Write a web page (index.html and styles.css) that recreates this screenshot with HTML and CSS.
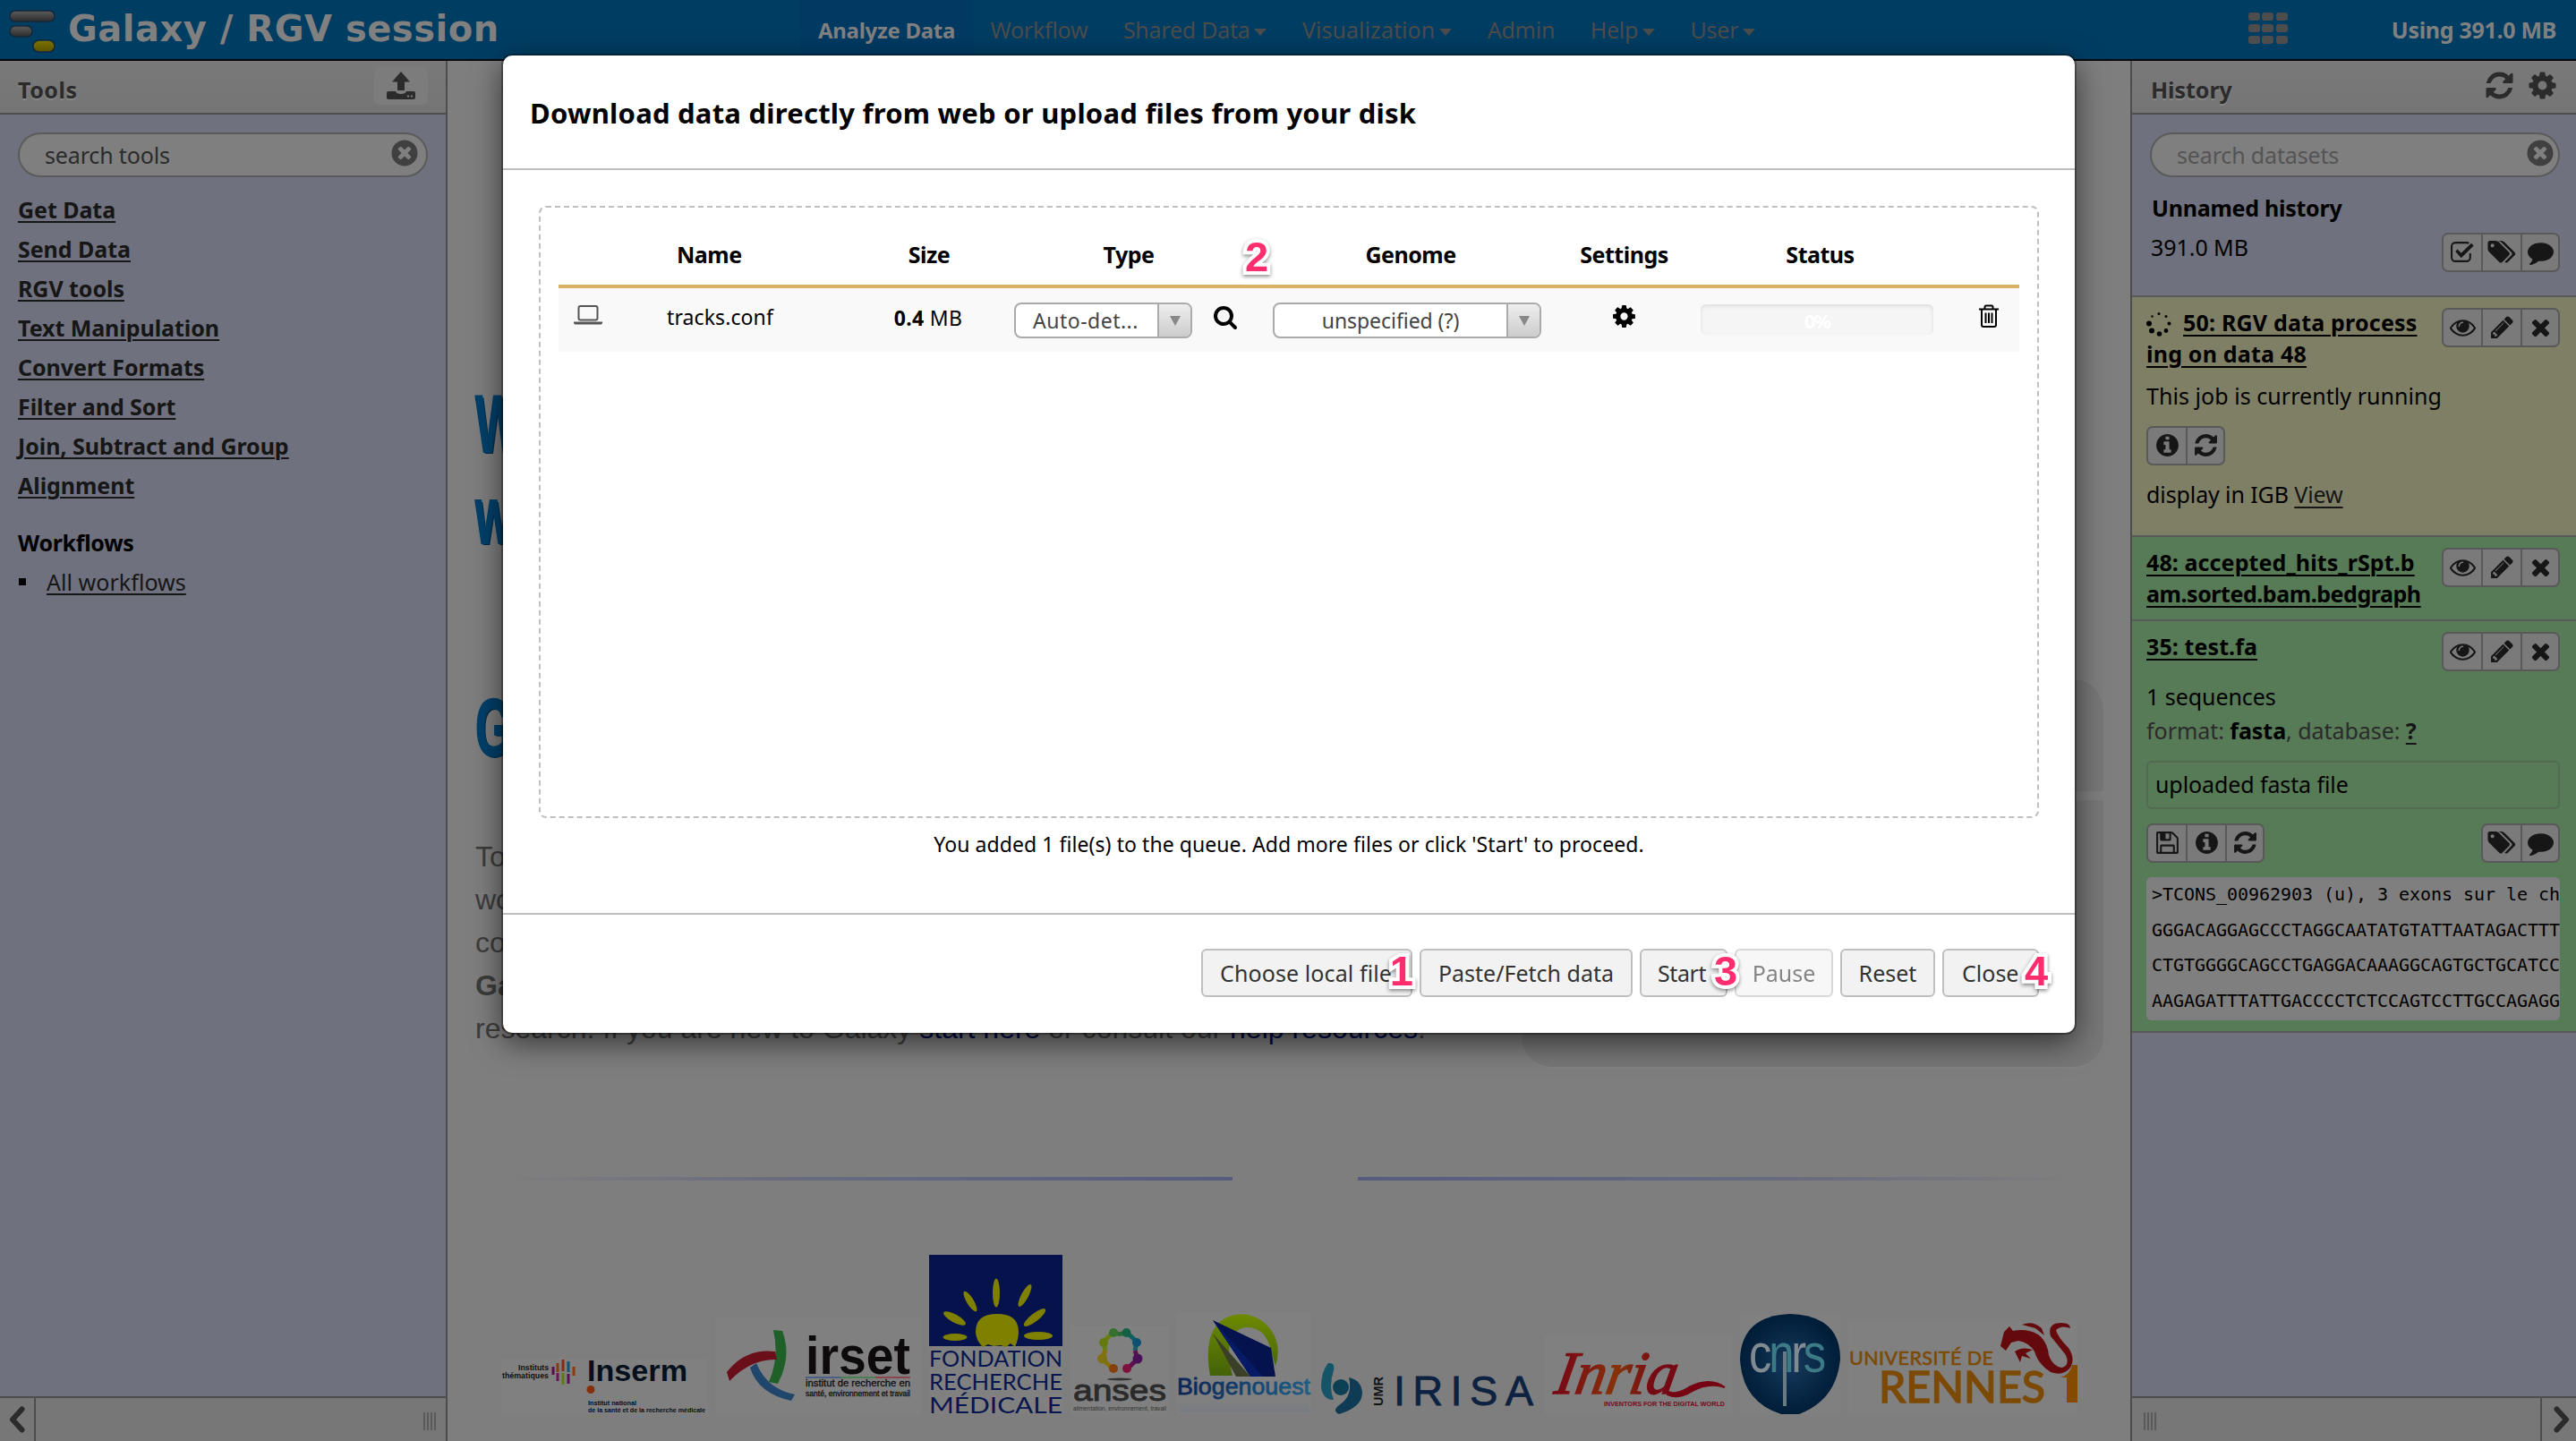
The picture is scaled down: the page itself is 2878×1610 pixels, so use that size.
FILE: index.html
```html
<!DOCTYPE html>
<html lang="en">
<head>
<meta charset="utf-8">
<title>Galaxy / RGV session</title>
<link rel="stylesheet" href="styles.css">
</head>
<body>
<svg class="sprite" aria-hidden="true">
  <symbol id="refresh" viewBox="0 0 1792 1792"><path d="M1639 1056q0 5-1 7-64 268-268 434.5t-478 166.5q-146 0-282.5-55t-243.5-157l-129 129q-19 19-45 19t-45-19-19-45v-448q0-26 19-45t45-19h448q26 0 45 19t19 45-19 45l-137 137q71 66 161 102t187 36q134 0 250-65t186-179q11-17 53-117 8-23 30-23h192q13 0 22.500 9.500t9.500 22.500zm25-800v448q0 26-19 45t-45 19h-448q-26 0-45-19t-19-45 19-45l138-138q-148-137-349-137-134 0-250 65t-186 179q-11 17-53 117-8 23-30 23h-199q-13 0-22.500-9.500t-9.500-22.500v-7q65-268 270-434.500t480-166.500q146 0 284 55.500t245 156.500l130-129q19-19 45-19t45 19 19 45z"/></symbol>
  <symbol id="cog" viewBox="0 0 1792 1792"><path d="M1152 896q0-106-75-181t-181-75-181 75-75 181 75 181 181 75 181-75 75-181zm512-109v222q0 12-8 23t-20 13l-185 28q-19 54-39 91 35 50 107 138 10 12 10 25t-9 23q-27 37-99 108t-94 71q-12 0-26-9l-138-108q-44 23-91 38-16 136-29 186-7 28-36 28h-222q-14 0-24.500-8.500t-11.500-21.500l-28-184q-49-16-90-37l-141 107q-10 9-25 9-14 0-25-11-126-114-165-168-7-10-7-23 0-12 8-23 15-21 51-66.500t54-70.500q-27-50-41-99l-183-27q-13-2-21-12.500t-8-23.500v-222q0-12 8-23t19-13l186-28q14-46 39-92-40-57-107-138-10-12-10-24 0-10 9-23 26-36 98.500-107.500t94.500-71.500q13 0 26 10l138 107q44-23 91-38 16-136 29-186 7-28 36-28h222q14 0 24.500 8.500t11.500 21.500l28 184q49 16 90 37l142-107q9-9 24-9 13 0 25 10 129 119 165 170 7 8 7 22 0 12-8 23-15 21-51 66.500t-54 70.500q26 50 41 98l183 28q13 2 21 12.500t8 23.500z"/></symbol>
  <symbol id="times" viewBox="0 0 1792 1792"><path d="M1490 1322q0 40-28 68l-136 136q-28 28-68 28t-68-28l-294-294-294 294q-28 28-68 28t-68-28l-136-136q-28-28-28-68t28-68l294-294-294-294q-28-28-28-68t28-68l136-136q28-28 68-28t68 28l294 294 294-294q28-28 68-28t68 28l136 136q28 28 28 68t-28 68l-294 294 294 294q28 28 28 68z"/></symbol>
  <symbol id="clear" viewBox="0 0 1792 1792"><path d="M1277 1122q0-26-19-45l-181-181 181-181q19-19 19-45 0-27-19-46l-90-90q-19-19-46-19-26 0-45 19l-181 181-181-181q-19-19-45-19-27 0-46 19l-90 90q-19 19-19 46 0 26 19 45l181 181-181 181q-19 19-19 45 0 27 19 46l90 90q19 19 46 19 26 0 45-19l181-181 181 181q19 19 45 19 27 0 46-19l90-90q19-19 19-46zm387-226q0 209-103 385.500t-279.500 279.500-385.500 103-385.500-103-279.500-279.500-103-385.500 103-385.500 279.500-279.500 385.500-103 385.500 103 279.500 279.500 103 385.500z"/></symbol>
  <symbol id="pencil" viewBox="0 0 1792 1792"><path d="M491 1536l91-91-235-235-91 91v107h128v128h107zm523-928q0-22-22-22-10 0-17 7l-542 542q-7 7-7 17 0 22 22 22 10 0 17-7l542-542q7-7 7-17zm-54-192l416 416-832 832h-416v-416zm683 96q0 53-37 90l-166 166-416-416 166-165q36-38 90-38 53 0 91 38l235 234q37 39 37 91z"/></symbol>
  <symbol id="eye" viewBox="0 0 1792 1792"><path d="M1664 960q-152-236-381-353 61 104 61 225 0 185-131.500 316.500t-316.500 131.500-316.500-131.500-131.500-316.500q0-121 61-225-229 117-381 353 133 205 333.500 326.500t434.500 121.500 434.500-121.500 333.500-326.500zm-720-384q0-20-14-34t-34-14q-125 0-214.500 89.500t-89.500 214.500q0 20 14 34t34 14 34-14 14-34q0-86 61-147t147-61q20 0 34-14t14-34zm848 384q0 34-20 69-140 230-376.500 368.500t-499.500 138.500-499.500-139-376.500-368q-20-35-20-69t20-69q140-229 376.500-368t499.500-139 499.500 139 376.500 368q20 35 20 69z"/></symbol>
  <symbol id="comment" viewBox="0 0 1792 1792"><path d="M1792 896q0 174-120 321.500t-326 233-450 85.500q-70 0-145-8-198 175-460 242-49 14-114 22-17 2-30.500-9t-17.500-29v-1q-3-4-.5-12t2-10 4.500-9.500l6-9 7-8.500 8-9q7-8 31-34.500t34.500-38 31-39.500 32.500-51 27-59 26-76q-157-89-247.500-220t-90.500-281q0-130 71-248.500t191-204.500 286-136.500 348-50.500q244 0 450 85.500t326 233 120 321.500z"/></symbol>
  <symbol id="tags" viewBox="0 0 1920 1792"><path d="M448 448q0-53-37.500-90.500t-90.500-37.500-90.500 37.500-37.500 90.500 37.500 90.500 90.500 37.500 90.500-37.500 37.500-90.500zm1067 576q0 53-37 90l-491 492q-39 37-91 37-53 0-90-37l-715-716q-38-37-64.500-101t-26.500-117v-416q0-52 38-90t90-38h416q53 0 117 26.500t102 64.500l715 714q37 39 37 91z"/><path d="M1899 1024q0 53-37 90l-491 492q-39 37-91 37-36 0-59-14t-53-45l470-470q37-37 37-90 0-52-37-91l-715-714q-38-38-102-64.500t-117-26.500h224q53 0 117 26.500t102 64.500l715 714q37 39 37 91z"/></symbol>
  <symbol id="info" viewBox="0 0 1792 1792"><path d="M1152 1376v-160q0-14-9-23t-23-9h-96v-512q0-14-9-23t-23-9h-320q-14 0-23 9t-9 23v160q0 14 9 23t23 9h96v320h-96q-14 0-23 9t-9 23v160q0 14 9 23t23 9h448q14 0 23-9t9-23zm-128-896v-160q0-14-9-23t-23-9h-192q-14 0-23 9t-9 23v160q0 14 9 23t23 9h192q14 0 23-9t9-23zm640 416q0 209-103 385.500t-279.500 279.500-385.500 103-385.500-103-279.500-279.500-103-385.500 103-385.500 279.500-279.500 385.500-103 385.500 103 279.500 279.500 103 385.500z"/></symbol>
  <symbol id="save" viewBox="0 0 1792 1792"><path d="M512 1536h768v-384h-768v384zm896 0h128v-896q0-14-10-38.500t-20-34.500l-281-281q-10-10-34-20t-39-10v416q0 40-28 68t-68 28h-576q-40 0-68-28t-28-68v-416h-128v1280h128v-416q0-40 28-68t68-28h832q40 0 68 28t28 68v416zm-384-928v-320q0-13-9.500-22.500t-22.500-9.500h-192q-13 0-22.500 9.500t-9.500 22.500v320q0 13 9.500 22.500t22.500 9.500h192q13 0 22.500-9.500t9.500-22.500zm640 32v928q0 40-28 68t-68 28h-1344q-40 0-68-28t-28-68v-1344q0-40 28-68t68-28h928q40 0 88 20t76 48l280 280q28 28 48 76t20 88z"/></symbol>
  <symbol id="search" viewBox="0 0 1792 1792"><path d="M1216 832q0-185-131.500-316.500t-316.500-131.500-316.500 131.500-131.500 316.500 131.500 316.500 316.500 131.500 316.500-131.500 131.500-316.500zm512 832q0 52-38 90t-90 38q-54 0-90-38l-343-342q-179 124-399 124-143 0-273.500-55.500t-225-150-150-225-55.500-273.500 55.500-273.500 150-225 225-150 273.500-55.500 273.500 55.500 225 150 150 225 55.500 273.500q0 220-124 399l343 343q37 37 37 90z"/></symbol>
  <symbol id="check" viewBox="0 0 28 28"><path d="M22 15.500V20a4 4 0 0 1-4 4H6a4 4 0 0 1-4-4V8a4 4 0 0 1 4-4h12q1.500 0 2.500.7" fill="none" stroke="currentColor" stroke-width="2"/><path d="M6 13.500l2.300-2.300 4 4L23.200 4.600l2.600 2.600L12.300 20.500z"/></symbol>
  <symbol id="chev" viewBox="0 0 18 30"><path d="M14.500 3.500L4 15l10.500 11.500" fill="none" stroke="currentColor" stroke-width="6" stroke-linecap="round" stroke-linejoin="round"/></symbol>
</svg>

<header class="masthead">
  <div class="brand">
    <svg class="brand-logo" width="52" height="50" viewBox="0 0 52 50">
      <defs>
        <linearGradient id="gb" x2="0" y2="1"><stop offset="0" stop-color="#5c5c5c"/><stop offset="1" stop-color="#2c2c2c"/></linearGradient>
        <linearGradient id="gy" x2="0" y2="1"><stop offset="0" stop-color="#7d7400"/><stop offset="1" stop-color="#5a5200"/></linearGradient>
      </defs>
      <rect x="1" y="2" width="50" height="12" rx="6" fill="url(#gb)" stroke="#14283a" stroke-width="1.500"/>
      <rect x="1" y="19" width="25" height="12" rx="6" fill="url(#gb)" stroke="#14283a" stroke-width="1.500"/>
      <rect x="27" y="35" width="24" height="13" rx="6.500" fill="url(#gy)" stroke="#14283a" stroke-width="1.500"/>
    </svg>
    <span class="brand-name">Galaxy / RGV session</span>
  </div>
  <nav class="nav">
    <a class="nav-item active">Analyze Data</a>
    <a class="nav-item">Workflow</a>
    <a class="nav-item drop">Shared Data</a>
    <a class="nav-item drop viz">Visualization</a>
    <a class="nav-item">Admin</a>
    <a class="nav-item drop">Help</a>
    <a class="nav-item drop">User</a>
  </nav>
  <div class="apps"><i></i><i></i><i></i><i></i><i></i><i></i><i></i><i></i><i></i></div>
  <div class="quota">Using 391.0 MB</div>
</header>

<main class="main">
  <aside class="panel tools">
    <div class="panel-head">
      <span>Tools</span>
      <span class="upload"><svg width="32" height="32" viewBox="0 0 32 32"><path d="M16 0L26 11.500H20V21H12V11.500H6z"/><path d="M2 22h8q1 3 6 3t6-3h8q2 0 2 2v5q0 2-2 2H2q-2 0-2-2v-5q0-2 2-2z"/><circle cx="24" cy="27.500" r="1.200" fill="#777"/><circle cx="28" cy="27.500" r="1.200" fill="#777"/></svg></span>
    </div>
    <div class="panel-body">
      <div class="searchbox"><span>search tools</span><svg class="clear"><use href="#clear"/></svg></div>
      <div class="tool-list">
        <a>Get Data</a><a>Send Data</a><a>RGV tools</a><a>Text Manipulation</a><a>Convert Formats</a><a>Filter and Sort</a><a>Join, Subtract and Group</a><a>Alignment</a>
      </div>
      <div class="wf-title">Workflows</div>
      <div class="wf-item"><i></i><a>All workflows</a></div>
    </div>
    <div class="panel-foot">
      <div class="fold"><svg width="18" height="30"><use href="#chev"/></svg></div>
      <div class="grip"></div>
    </div>
  </aside>

  <section class="center">
    <div class="welcome">
      <div class="intro">
        <h1 class="big">W</h1>
        <h1 class="big">w</h1>
        <h1 class="big second">G</h1>
        <p class="lead">To<br>wo<br>co<br><b>Ga</b><br>research. If you are new to Galaxy <a>start here</a> or consult our <a>help resources</a>.</p>
      </div>
      <div class="cards"><div class="card top"></div><div class="card bottom"></div></div>
    </div>
    <div class="rules"><i></i><i></i></div>
    <div class="logos">
      <svg width="230" height="62" viewBox="0 0 230 62">
        <rect width="230" height="62" fill="#808080"/>
        <g class="logo-bold" fill="#111"><text x="19" y="13" font-size="8.500" textLength="34" lengthAdjust="spacingAndGlyphs">Instituts</text><text x="1" y="22" font-size="8.500" textLength="52" lengthAdjust="spacingAndGlyphs">thématiques</text></g>
        <g stroke-width="3"><path d="M58 9v9" stroke="#5a1050"/><path d="M63 5v10M81 9v10" stroke="#8a3a10"/><path d="M63 16v9" stroke="#70105a"/><path d="M69 1v13" stroke="#8a2a10"/><path d="M69 16v13" stroke="#5e7a10"/><path d="M75 3v12" stroke="#0e5578"/><path d="M75 17v11" stroke="#5a1050"/></g>
        <g class="logo-bold" fill="#05101c"><text x="96" y="25" font-size="34" textLength="112" lengthAdjust="spacingAndGlyphs">Inserm</text><text x="97" y="52" font-size="8" textLength="54" lengthAdjust="spacingAndGlyphs">Institut national</text><text x="97" y="60" font-size="8" textLength="131" lengthAdjust="spacingAndGlyphs">de la santé et de la recherche médicale</text></g>
        <circle cx="100" cy="34.500" r="4.500" fill="#86300a"/>
      </svg>
      <svg width="230" height="108" viewBox="0 0 230 108">
        <rect width="230" height="108" fill="#808080"/>
        <path d="M65 14Q72 45 60 72L70 74Q86 44 75 15z" fill="#1f5f28"/>
        <path d="M13 61Q34 34 67 38L69 47Q40 46 16 71z" fill="#6a0f1a"/>
        <path d="M46 51L39 56Q48 85 85 93L89 86Q58 80 46 51z" fill="#20466c"/>
        <g class="logo-bold" fill="#0c0a0a"><text x="101" y="63" font-size="59" textLength="117" lengthAdjust="spacingAndGlyphs">irset</text></g>
        <path d="M101 67h39" stroke="#4a5f86" stroke-width="2"/><path d="M140 67h39" stroke="#4d7d52" stroke-width="2"/><path d="M179 67h39" stroke="#8a4650" stroke-width="2"/>
        <g class="logo-reg" fill="#111" stroke="#111" stroke-width=".3"><text x="101" y="77" font-size="10.500" textLength="117" lengthAdjust="spacingAndGlyphs">institut de recherche en</text><text x="101" y="87.500" font-size="9" textLength="117" lengthAdjust="spacingAndGlyphs">santé, environnement et travail</text></g>
      </svg>
      <svg width="149" height="178" viewBox="0 0 149 178">
        <rect width="149" height="178" fill="#808080"/><rect width="149" height="102" fill="#05124c"/>
        <g fill="#7f7f00"><path d="M52 86q0-20 24-20t24 20q0 8-4 17l-5-4-5 4-6-2-8 1-6-2-6 3q-8-8-8-17z"/><ellipse cx="75" cy="42.500" rx="4" ry="16"/><ellipse cx="107" cy="45.500" rx="4" ry="14" transform="rotate(28 107 45.500)"/><ellipse cx="46" cy="52" rx="4" ry="13" transform="rotate(-31 46 52)"/><ellipse cx="28.500" cy="71" rx="4.500" ry="14" transform="rotate(-61 28.500 71)"/><ellipse cx="118" cy="70" rx="4.500" ry="15" transform="rotate(52 118 70)"/><ellipse cx="29" cy="92" rx="13.500" ry="4"/><ellipse cx="122" cy="90.500" rx="16" ry="4.500"/></g>
        <g class="logo-light" fill="#07164f" font-size="25"><text x="0" y="125" textLength="149" lengthAdjust="spacingAndGlyphs">FONDATION</text><text x="0" y="150.500" textLength="149" lengthAdjust="spacingAndGlyphs">RECHERCHE</text><text x="0" y="176.500" textLength="149" lengthAdjust="spacingAndGlyphs">MÉDICALE</text></g>
      </svg>
      <svg width="110" height="98" viewBox="0 0 110 98">
        <rect width="110" height="98" fill="#808080"/>
        <g fill="none" stroke-width="5"><path d="M62 6L74 17L72 27" stroke="#0f6064"/><path d="M72 27L75 36L63 48" stroke="#5c1050"/><path d="M48 6L37 17L39 27" stroke="#687d12"/><path d="M39 27L35 36L48 48" stroke="#86700a"/><path d="M48 6q7 5 14 0" stroke="#2a6a3a"/></g>
        <circle cx="48" cy="7" r="5" fill="#35702c"/><circle cx="62.500" cy="7" r="5" fill="#136045"/><circle cx="37" cy="18" r="5" fill="#647a10"/><circle cx="74" cy="18" r="5" fill="#0e5072"/><circle cx="35.500" cy="36" r="5.500" fill="#807010"/><circle cx="75" cy="36" r="5.500" fill="#4c1058"/><circle cx="48" cy="47" r="5" fill="#86400c"/><circle cx="63" cy="47" r="5" fill="#80103c"/>
        <ellipse cx="55" cy="59" rx="14" ry="1.500" fill="#333"/>
        <text class="logo-reg" x="3" y="83" font-size="34" fill="#2b2b2b" stroke="#2b2b2b" textLength="104" lengthAdjust="spacingAndGlyphs">anses</text>
        <text class="logo-reg" x="3" y="93.500" font-size="7.500" fill="#333" textLength="104" lengthAdjust="spacingAndGlyphs">alimentation, environnement, travail</text>
      </svg>
      <svg width="150" height="114" viewBox="0 0 150 114">
        <defs><linearGradient id="bt"><stop offset="0" stop-color="#0a2455"/><stop offset="1" stop-color="#1d5f86"/></linearGradient><linearGradient id="bg" x2="0" y2="1"><stop offset="0" stop-color="#6d8a00"/><stop offset="1" stop-color="#446208"/></linearGradient><linearGradient id="bs" x2="0" y2="1"><stop offset="0" stop-color="#5f6e88" stop-opacity="0"/><stop offset="1" stop-color="#4d6080" stop-opacity=".7"/></linearGradient></defs>
        <rect width="150" height="114" fill="#808080"/>
        <path d="M37 71Q28 20 55 6Q78-4 98 12Q119 32 110 60L104 40Q98 16 76 17Q50 22 62 71z" fill="url(#bg)"/>
        <path d="M40 24L82 72H66z" fill="#3a4028"/><path d="M40 9L105 40L110 72H82z" fill="#04124e"/><path d="M40 9L96 72H82z" fill="#071a66"/>
        <text class="logo-reg" fill="url(#bt)" stroke="url(#bt)" stroke-width=".8" font-size="26" x="0" y="92" textLength="149" lengthAdjust="spacingAndGlyphs">Biogenouest</text>
        <path d="M2 98h146v14H2z" fill="url(#bs)" opacity=".25"/>
      </svg>
      <svg width="242" height="60" viewBox="0 0 242 60">
        <path d="M10 3Q18 2 16 11Q10 30 16 44Q4 44 2 30Q2 12 10 3z" fill="#165468"/><path d="M33 19Q47 22 48 36Q48 52 22 60Q14 56 22 50Q38 40 33 19z" fill="#0f3c54"/><circle cx="24" cy="30" r="9" fill="#0e4055"/>
        <text class="logo-bold" transform="translate(71 51) rotate(-90)" font-size="15" fill="#111" textLength="33" lengthAdjust="spacingAndGlyphs">UMR</text>
        <text class="logo-reg" x="83" y="50" font-size="47" fill="#0d2240" stroke="#0d2240" stroke-width=".8" textLength="156" lengthAdjust="spacing">IRISA</text>
      </svg>
      <svg width="210" height="88" viewBox="0 0 210 88">
        <defs><linearGradient id="ir"><stop offset="0" stop-color="#780516"/><stop offset=".5" stop-color="#86320a"/><stop offset=".8" stop-color="#760a14"/></linearGradient></defs>
        <rect width="210" height="88" fill="#808080"/>
        <text class="logo-script" transform="translate(10 65) skewX(-10)" font-size="68" fill="url(#ir)" stroke="url(#ir)" stroke-width="1.500" textLength="136" lengthAdjust="spacingAndGlyphs">Inria</text>
        <path d="M138 64Q150 66 162 58Q185 46 202 58Q184 52 166 62Q150 72 138 66z" fill="#760514" stroke="#760514" stroke-width="2"/>
        <text class="logo-bold" x="67" y="79" font-size="8" fill="#760a1c" textLength="135" lengthAdjust="spacingAndGlyphs">INVENTORS FOR THE DIGITAL WORLD</text>
      </svg>
      <svg width="112" height="112" viewBox="0 0 112 112">
        <defs><radialGradient id="cn"><stop offset="0" stop-color="#16395c"/><stop offset="1" stop-color="#001d38"/></radialGradient></defs>
        <rect width="112" height="112" fill="#808080"/><path d="M56 0Q112 2 112 50Q108 96 66 112H46Q2 98 0 50Q2 2 56 0z" fill="url(#cn)"/>
        <text class="logo-reg cnrs" transform="translate(10 65) scale(.82 1)" font-size="62"><tspan fill="#808a90">c</tspan><tspan fill="#3c7a86">n</tspan><tspan fill="#808a90">r</tspan><tspan fill="#3c7a86">s</tspan></text>
        <path d="M50 42V103" stroke="#6a7a84" stroke-width="4"/>
      </svg>
      <svg width="256" height="104" viewBox="0 0 256 104">
        <rect width="256" height="104" fill="#808080"/>
        <g class="logo-light" fill="#7c4a04" stroke="#7c4a04" stroke-width=".6"><text x="1" y="49" font-size="21.500" textLength="161" lengthAdjust="spacing">UNIVERSITÉ DE</text><text x="34" y="91" font-size="48" stroke-width="1.600" textLength="186" lengthAdjust="spacingAndGlyphs">RENNES</text></g>
        <path d="M256 49V91H244V63H237Q248 60 250 49z" fill="#844a00"/>
        <g fill="#640a0c"><path d="M170 28L174 12 180 6 184 11Q200 8 212 15Q222 22 224 38Q228 50 238 52Q248 50 243 38Q232 24 226 17Q222 2 238 2Q248 2 248 8Q238 4 232 10Q234 18 246 30Q254 42 248 52Q240 62 226 57Q212 48 208 34Q202 24 190 22L182 24 176 33z"/><path d="M186 34Q194 28 206 32L198 36 204 42 194 39 192 46z"/><path d="M194 4q12-5 22 4l3 8-10-8z"/></g>
      </svg>
    </div>
  </section>

  <aside class="panel history">
    <div class="panel-head">
      <span>History</span>
      <span class="head-icons"><svg><use href="#refresh"/></svg><svg><use href="#cog"/></svg></span>
    </div>
    <div class="panel-body">
      <div class="hist-top">
        <div class="searchbox pale"><span>search datasets</span><svg class="clear"><use href="#clear"/></svg></div>
        <div class="hist-name">Unnamed history</div>
        <div class="hist-row"><span>391.0 MB</span>
          <div class="btns"><b><svg><use href="#check"/></svg></b><b><svg class="wide"><use href="#tags"/></svg></b><b><svg><use href="#comment"/></svg></b></div>
        </div>
      </div>

      <div class="ds running">
        <div class="ds-head">
          <div class="ds-title"><svg class="spin" width="28" height="28" viewBox="0 0 28 28"><circle cx="14" cy="2.500" r="1.500"/><circle cx="22" cy="5.500" r="1.500"/><circle cx="25.500" cy="13.500" r="2"/><circle cx="22" cy="21.500" r="2.400"/><circle cx="14.500" cy="25" r="2.800"/><circle cx="6" cy="21.500" r="3"/><circle cx="3" cy="13.500" r="3"/><circle cx="6.500" cy="5.500" r="1.200"/></svg><a>50: RGV data process<br>ing on data 48</a></div>
          <div class="btns"><b><svg><use href="#eye"/></svg></b><b><svg><use href="#pencil"/></svg></b><b><svg><use href="#times"/></svg></b></div>
        </div>
        <div class="ds-line">This job is currently running</div>
        <div class="ds-actions"><div class="btns"><b><svg><use href="#info"/></svg></b><b><svg><use href="#refresh"/></svg></b></div></div>
        <div class="ds-line igb">display in IGB <a>View</a></div>
      </div>

      <div class="ds ok short">
        <div class="ds-head">
          <div class="ds-title"><a><span class="loose">48: accepted_hits_rSpt.b</span><br>am.sorted.bam.bedgraph</a></div>
          <div class="btns"><b><svg><use href="#eye"/></svg></b><b><svg><use href="#pencil"/></svg></b><b><svg><use href="#times"/></svg></b></div>
        </div>
      </div>

      <div class="ds ok">
        <div class="ds-head">
          <div class="ds-title"><a><span class="loose">35: test.fa</span></a></div>
          <div class="btns"><b><svg><use href="#eye"/></svg></b><b><svg><use href="#pencil"/></svg></b><b><svg><use href="#times"/></svg></b></div>
        </div>
        <div class="ds-meta">1 sequences<br><span>format: <b>fasta</b>, database: <a>?</a></span></div>
        <div class="ds-info">uploaded fasta file</div>
        <div class="ds-actions split">
          <div class="btns"><b><svg><use href="#save"/></svg></b><b><svg><use href="#info"/></svg></b><b><svg><use href="#refresh"/></svg></b></div>
          <div class="btns"><b><svg class="wide"><use href="#tags"/></svg></b><b><svg><use href="#comment"/></svg></b></div>
        </div>
        <pre class="peek">&gt;TCONS_00962903 (u), 3 exons sur le ch
GGGACAGGAGCCCTAGGCAATATGTATTAATAGACTTT
CTGTGGGGCAGCCTGAGGACAAAGGCAGTGCTGCATCC
AAGAGATTTATTGACCCCTCTCCAGTCCTTGCCAGAGG</pre>
      </div>
    </div>
    <div class="panel-foot">
      <div class="grip"></div>
      <div class="fold"><svg class="flip" width="18" height="30"><use href="#chev"/></svg></div>
    </div>
  </aside>
</main>

<div class="overlay">
  <div class="modal">
    <div class="modal-head">Download data directly from web or upload files from your disk</div>
    <div class="modal-body">
      <div class="dropzone">
        <div class="grid grid-head">
          <span></span><span class="c-name">Name</span><span>Size</span><span>Type<em class="mark m2">2</em></span><span>Genome</span><span>Settings</span><span>Status</span><span></span>
        </div>
        <div class="grid grid-row">
          <span><svg class="laptop" width="32" height="22" viewBox="0 0 32 22"><rect x="5.500" y="1" width="21" height="15.500" rx="2" fill="none" stroke="#555" stroke-width="2"/><path d="M0 18.500h32v1q0 2-3 2H3q-3 0-3-2z" fill="#555"/></svg></span>
          <span class="c-file">tracks.conf</span>
          <span class="c-size"><b>0.4</b> MB</span>
          <span class="c-type"><div class="select small"><div>Auto-det...</div><i></i></div><svg class="mag"><use href="#search"/></svg></span>
          <span class="c-genome"><div class="select"><div>unspecified (?)</div><i></i></div></span>
          <span><svg class="gear"><use href="#cog"/></svg></span>
          <span><div class="progress">0%</div></span>
          <span><svg class="trash" width="22" height="27" viewBox="0 0 22 27"><path d="M0 5.500h22M6.500 5V3q0-1.500 1.500-1.500h6q1.500 0 1.500 1.500v2M3 6v17q0 2 2 2h12q2 0 2-2V6M7.500 9.500v11.500M11 9.500v11.500M14.500 9.500v11.500" fill="none" stroke="#000" stroke-width="2"/></svg></span>
        </div>
      </div>
      <div class="message">You added 1 file(s) to the queue. Add more files or click 'Start' to proceed.</div>
    </div>
    <div class="modal-foot">
      <button class="btn w1">Choose local file<em class="mark m1">1</em></button>
      <button class="btn w2">Paste/Fetch data</button>
      <button class="btn w3">Start<em class="mark m3">3</em></button>
      <button class="btn w4 off">Pause</button>
      <button class="btn w5">Reset</button>
      <button class="btn w6">Close<em class="mark m4">4</em></button>
    </div>
  </div>
</div>
</body>
</html>
```

FILE: styles.css
```css
* { box-sizing: border-box; }
body {
  margin: 0; width: 2878px; height: 1610px; overflow: hidden;
  display: flex; flex-direction: column;
  font: 25px/40px "Noto Sans", "Open Sans", sans-serif;
  letter-spacing: -.05px; color: #000; background: #7e7e7e;
}
svg { display: block; fill: currentColor; flex: none; }
.sprite { position: absolute; width: 0; height: 0; }

/* masthead */
.masthead {
  height: 68px; flex: none; display: flex; align-items: center;
  background: #003d63; border-bottom: 2px solid #05080f; color: #808080;
  padding-right: 22px;
}
.brand { width: 894px; display: flex; align-items: center; padding-left: 10px; gap: 14px; }
.brand-logo { margin-top: 3px; }
.brand-name { font: bold 40px/64px "DejaVu Sans", sans-serif; letter-spacing: .5px; margin-top: -3px; }
.nav { display: flex; height: 66px; }
.nav-item { padding: 0 20px 0 19.500px; line-height: 65px; letter-spacing: -.25px; color: #4c4c4c; display: flex; align-items: center; }
.nav-item.active { color: #808080; font-weight: bold; font-size: 24px; letter-spacing: -.3px; padding-left: 20px; background: #003a63; }
.nav-item.viz { letter-spacing: .05px; }
.nav-item.drop::after { content: ""; border: 7.500px solid transparent; border-top: 8px solid #4c4c4c; border-bottom: 0; margin: 5px 0 0 5px; }
.apps { margin-left: auto; margin-top: -4px; display: grid; grid-template-columns: repeat(3, 13px); grid-auto-rows: 9px; gap: 4px 2.5px; }
.apps i { background: #4d4d4d; border-radius: 3px; }
.quota { font-weight: bold; letter-spacing: -.3px; margin-left: 116px; margin-top: -1px; }

/* panels */
.main { flex: 1; display: grid; grid-template-columns: 500px 1fr 498px; min-height: 0; }
.panel { display: flex; flex-direction: column; background: #6f717e; min-height: 0; }
.tools { border-right: 2px solid #4d4d4d; }
.history { border-left: 2px solid #4d4d4d; }
.panel-head {
  height: 60px; flex: none; padding: 6px 20px 0; display: flex; align-items: center; justify-content: space-between;
  background: linear-gradient(#797979, #757575); border-bottom: 2px solid #4d4d4d; color: #2b2b2b; font-weight: bold;
  text-shadow: 0 2px 0 #868686;
}
.tools .panel-head { letter-spacing: .5px; }
.upload { width: 60px; height: 42px; border-radius: 6px; background: #7c7c7c; display: flex; justify-content: center; align-items: center; margin-top: -8px; color: #2b2b2b; }
.head-icons { display: flex; gap: 13px; margin-top: -9px; }
.head-icons svg { width: 35px; height: 35px; }
.panel-body { flex: 1; padding: 20px 20px 0 20px; min-height: 0; }
.history .panel-head { padding: 6px 20px 0 21px; }
.history .panel-body { padding: 0; }
.searchbox {
  height: 50px; border: 2px solid #5b5b5b; border-radius: 25px; background: #7f7f7f; color: #2b2b2b;
  display: flex; align-items: center; justify-content: space-between; padding: 0 7px 0 28px; letter-spacing: -.15px; line-height: 46px;
}
.searchbox.pale { color: #545454; padding-right: 3px; }
.searchbox .clear { width: 34px; height: 34px; color: #404040; margin-top: -4px; }
.tool-list { display: flex; flex-direction: column; align-items: flex-start; padding-top: 14px; font-weight: bold; line-height: 44px; color: #161616; }
.tool-list a, .wf-item a { text-decoration: underline; text-decoration-thickness: 2px; text-underline-offset: 3px; }
.tool-list a { letter-spacing: -.05px; }
.wf-title { font-weight: bold; margin-top: 20px; line-height: 44px; letter-spacing: -.3px; }
.wf-item { display: flex; align-items: center; line-height: 44px; gap: 23px; padding-left: 1px; color: #161616; letter-spacing: .05px; }
.wf-item i { width: 8px; height: 8px; background: #000; }
.panel-foot { height: 50px; flex: none; border-top: 2px solid #4d4d4d; background: #777; display: flex; justify-content: space-between; }
.fold { width: 40px; border-right: 2px solid #4d4d4d; display: flex; align-items: center; justify-content: center; color: #2b2b2b; }
.grip { width: 14px; height: 20px; margin: 16px 11px 0 13px; background: repeating-linear-gradient(90deg, #5a5a5a 0 2px, #777 2px 4px); }
.history .fold { border-right: 0; border-left: 2px solid #4d4d4d; padding-left: 6px; }
.flip { transform: scaleX(-1); }

/* history */
.hist-top { height: 204px; padding: 20px 18px 0 20px; border-bottom: 2px solid #595959; }
.hist-name { font-weight: bold; letter-spacing: -.25px; padding: 14px 0 0 2px; line-height: 40px; }
.hist-row { display: flex; justify-content: space-between; padding: 4px 0 0 1px; }
.hist-row .btns { margin-top: 4px; }
.btns { display: flex; height: 44px; border: 2px solid #595959; border-radius: 7px; background: #7a7a7a; color: #161616; flex: none; }
.btns b { width: 44px; display: flex; align-items: center; justify-content: center; border-left: 2px solid #595959; }
.btns b:first-child { width: 42px; border-left: 0; }
.btns b:last-child { width: 42px; }
.btns svg { width: 29px; height: 29px; margin-top: -1px; }
.btns svg.wide { width: 32px; }
.ds { padding: 11px 18px 0 16px; border-bottom: 2px solid #595959; }
.ds.running { height: 268px; background: #7f7f66; }
.ds.ok { height: 460px; background: #577a57; }
.ds.ok.short { height: 94px; }
.ds-head { display: flex; justify-content: space-between; }
.ds-head .btns { margin-top: 1px; }
.ds-title { font-weight: bold; line-height: 35px; text-decoration: underline; text-decoration-thickness: 2px; text-underline-offset: 4px; letter-spacing: .2px; white-space: nowrap; }
.ok .ds-title { letter-spacing: -.45px; }
.ok .loose { letter-spacing: .1px; }
.spin { display: inline-block; vertical-align: -6px; margin-right: 13px; }
.ds-line { padding-top: 9px; line-height: 40px; letter-spacing: .05px; }
.ds-line.igb { padding-top: 12px; letter-spacing: -.1px; }
.ds-line a, .ds-meta a { text-decoration: underline; text-decoration-thickness: 2px; text-underline-offset: 4px; color: #161616; }
.ds-actions { display: flex; padding-top: 14px; }
.ds-actions.split { justify-content: space-between; padding-top: 16px; }
.ds-meta { line-height: 38px; padding-top: 9px; }
.ds-meta span { color: #2b2b2b; }
.ds-meta b { color: #000; }
.ds-meta a { font-weight: bold; }
.ds-info { margin-top: 15px; height: 54px; border: 2px solid #506b50; border-radius: 6px; line-height: 49px; padding-left: 8px; letter-spacing: -.1px; }
.peek { margin: 16px 0 0; height: 160px; border-radius: 6px; background: #7f7f7f; padding-left: 6px; overflow: hidden; font: 20px/40px "DejaVu Sans Mono", monospace; line-height: 39.5px; letter-spacing: -.04px; }

/* welcome page */
.center { display: flex; flex-direction: column; padding: 0 30px 0 31px; min-width: 0; }
.welcome { display: flex; justify-content: space-between; height: 1126px; }
.intro { padding-top: 355px; }
.big { margin: 0; font: bold 90px/102px "Liberation Sans", sans-serif; color: #00406a; -webkit-text-stroke: 2px #00406a; transform: scaleX(.58); transform-origin: 0 0; text-shadow: 3px 2px 0 #002d4c; }
.second { margin-top: 135px; }
.lead { margin: 69px 0 0; font: 32px/48px "Liberation Sans", sans-serif; color: #3c3c3c; letter-spacing: 0; white-space: nowrap; }
.lead a { color: #000c48; }
.cards { width: 650px; padding-top: 691px; display: flex; flex-direction: column; gap: 10px; }
.card { background: #777; }
.card.top { height: 125px; border-radius: 34px 34px 0 0; }
.card.bottom { flex: 1; border-radius: 0 0 34px 34px; border-bottom: 2px solid #828282; }
.rules { display: flex; justify-content: space-between; margin: 121px 29px 0; height: 4px; flex: none; }
.rules i { width: 817px; background: linear-gradient(90deg, rgba(86, 92, 128, 0), rgba(86, 92, 128, .55) 40%, #565c80); }
.rules i + i { width: 804px; background: linear-gradient(270deg, rgba(86, 92, 128, 0), rgba(86, 92, 128, .55) 40%, #565c80); }
.logos { display: flex; align-items: flex-end; justify-content: space-between; height: 178px; margin: 83px 29px 0; flex: none; }
.logo-bold { font-family: "Liberation Sans", sans-serif; font-weight: bold; letter-spacing: 0; }
.logo-reg { font-family: "Liberation Sans", sans-serif; letter-spacing: 0; }
.logo-reg.cnrs { letter-spacing: -4px; }
.logo-light { font-family: "Lato", sans-serif; letter-spacing: 0; }
.logo-script { font-family: "Liberation Serif", serif; font-style: italic; letter-spacing: 0; }

/* upload dialog */
.overlay { position: absolute; inset: 0; display: flex; justify-content: center; align-items: flex-start; padding: 62px 0 0 2px; }
.modal { width: 1756px; height: 1092px; border-radius: 10px; background: #fff; box-shadow: 0 0 0 2px rgba(0, 0, 0, .3), 0 10px 34px rgba(0, 0, 0, .6); display: flex; flex-direction: column; }
.modal-head { height: 128px; border-bottom: 2px solid #bfbfbf; padding-left: 30px; font-weight: bold; font-size: 31px; letter-spacing: .23px; line-height: 129px; }
.modal-body { height: 832px; padding: 40px 40px 0; border-bottom: 2px solid #bfbfbf; }
.dropzone { height: 684px; border: 2px dashed #bfbfbf; border-radius: 8px; padding: 0 20px; }
.grid { display: grid; grid-template-columns: 66px 266px 164px 282px 348px 129px 309px 68px; }
.grid > span { display: flex; justify-content: center; position: relative; }
.grid-head { height: 90px; padding-top: 32px; font-weight: bold; border-bottom: 4px solid #d8b365; letter-spacing: -.5px; }
.grid > .c-name { justify-content: flex-start; padding-left: 66px; }
.grid-row { height: 71px; background: #f9f9f9; padding-top: 11px; font-size: 23px; align-items: start; }
.laptop { margin-top: 8px; }
.grid > .c-file { justify-content: flex-start; padding-left: 55px; padding-top: 1px; letter-spacing: .1px; }
.grid > .c-size { white-space: pre; padding: 2px 2px 0 0; letter-spacing: .3px; }
.grid > .c-type { justify-content: flex-start; padding-left: 13px; }
.grid > .c-genome { justify-content: flex-start; padding-left: 20px; }
.select { width: 300px; height: 40px; margin-top: 5px; border: 2px solid #aaa; border-radius: 8px; background: #fff; display: flex; color: #444; line-height: 37px; text-align: center; overflow: hidden; }
.select.small { width: 199px; }
.select div { flex: 1; }
.small div { text-align: left; padding-left: 19px; letter-spacing: .5px; }
.select i { width: 37px; border-left: 2px solid #aaa; background: linear-gradient(#eee, #ccc); display: flex; justify-content: center; align-items: center; }
.select i::after { content: ""; border: 6px solid transparent; border-top: 11px solid #888; border-bottom: 0; }
.mag { width: 28px; height: 28px; margin: 7px 0 0 23px; }
.gear { width: 29px; height: 29px; margin-top: 6px; }
.progress { width: 260px; height: 34px; margin-top: 7px; margin-right: 7px; background: #f5f5f5; border-radius: 6px; box-shadow: inset 0 2px 4px rgba(0, 0, 0, .1); color: #fff; font-size: 22px; font-weight: bold; line-height: 36px; text-align: center; letter-spacing: -2px; }
.trash { margin-top: 7px; }
.message { margin-top: 9px; text-align: center; font-size: 23px; letter-spacing: .07px; }
.modal-foot { flex: 1; display: flex; justify-content: flex-end; gap: 8px; padding: 38px 40px 0 0; }
.btn { position: relative; height: 54px; padding: 0; border: 2px solid #bfbfbf; border-radius: 6px; background: #f2f2f2; color: #333; font: inherit; line-height: 50px; white-space: nowrap; }
.w1 { width: 236px; text-align: left; padding-left: 19px; letter-spacing: .1px; }
.w2 { width: 238px; }
.w3 { width: 98px; text-align: left; padding-left: 18px; letter-spacing: -.4px; }
.w4 { width: 110px; }
.w5 { width: 106px; }
.w6 { width: 108px; text-align: left; padding-left: 20px; }
.off { opacity: .6; }
.mark {
  position: absolute; z-index: 2; font: bold 47px/54px "Liberation Sans", sans-serif; letter-spacing: 0; color: #ff2d6e;
  -webkit-text-stroke: 8px #fff; paint-order: stroke fill; filter: drop-shadow(0 2px 2px rgba(0, 0, 0, .45));
}
.m2 { left: 271px; top: -4px; }
.m1 { right: -3px; top: -4px; }
.m3 { left: 81px; top: -4px; }
.m4 { left: 90px; top: -4px; }
```
